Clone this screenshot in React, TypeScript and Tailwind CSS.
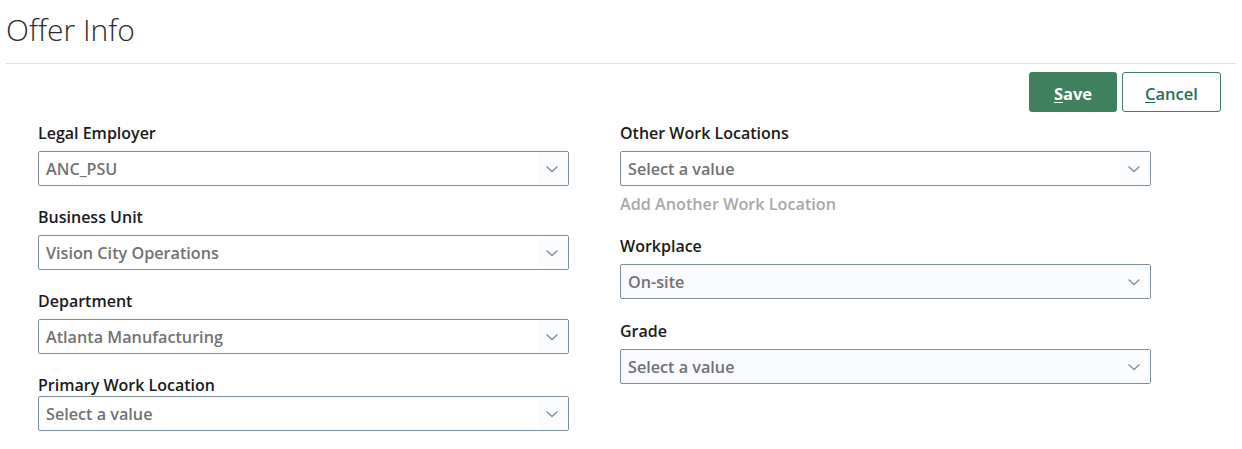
import React from 'react'

const font = { fontFamily: '"Open Sans", "Noto Sans", Arial, sans-serif' }

function Chevron() {
  return (
    <svg width="14" height="8" viewBox="0 0 14 8" fill="none">
      <path d="M1.5 1.5 L7 6.5 L12.5 1.5" stroke="#8a8f94" strokeWidth="1.4" />
    </svg>
  )
}

function SelectBox({ value, tinted }: { value: string; tinted?: boolean }) {
  return (
    <div
      className={`flex h-[35px] w-full items-center rounded-[2px] border border-[#7d8e9b] ${
        tinted ? 'bg-[#f9fbfe]' : 'bg-white'
      }`}
    >
      <span className="flex-1 truncate pl-[7px] pt-px text-[16.2px] font-semibold text-[#727272]">{value}</span>
      <span className="flex h-full w-[30px] items-center justify-center bg-[#fbfcfd] pr-[2px]">
        <Chevron />
      </span>
    </div>
  )
}

function Field({
  label,
  value,
  tinted,
  tight,
}: {
  label: string
  value: string
  tinted?: boolean
  tight?: boolean
}) {
  return (
    <div>
      <div className={`h-[22px] text-[16px] font-semibold leading-[22px] text-[#1a1a1a] ${tight ? '' : 'mb-[7px]'}`}>
        {label}
      </div>
      <SelectBox value={value} tinted={tinted} />
    </div>
  )
}

export default function App() {
  return (
    <div className="h-[449px] w-[1242px] bg-white" style={font}>
      <div className="px-[6px] pt-[10px]">
        <h1 className="h-[40px] text-[30px] font-light leading-[40px] text-[#2b2b2b]">Offer Info</h1>
        <div className="mt-[13px] h-px bg-[#d9dfe6]" />
      </div>

      <div className="mt-[8px] flex justify-end gap-[5px] pr-[21px]">
        <button className="h-[40px] w-[88px] rounded-[3px] bg-[#3f805e] pt-[4px] text-[16.5px] font-bold text-white">
          <span className="underline underline-offset-2">S</span>ave
        </button>
        <button className="h-[40px] w-[99px] rounded-[3px] border border-[#3f805e] bg-white pt-[4px] text-[16.5px] font-semibold text-[#2b6b5c]">
          <span className="underline underline-offset-2">C</span>ancel
        </button>
      </div>

      <div className="mt-[10px] grid grid-cols-[531px_531px] gap-x-[51px] pl-[38px]">
        <div className="flex flex-col gap-[20px]">
          <Field label="Legal Employer" value="ANC_PSU" />
          <Field label="Business Unit" value="Vision City Operations" />
          <Field label="Department" value="Atlanta Manufacturing" />
          <Field label="Primary Work Location" value="Select a value" tight />
        </div>
        <div className="flex flex-col">
          <Field label="Other Work Locations" value="Select a value" />
          <div className="mt-[8px] h-[20px] text-[16.2px] font-semibold leading-[20px] text-[#a8a8a8]">
            Add Another Work Location
          </div>
          <div className="mt-[21px]">
            <Field label="Workplace" value="On-site" tinted />
          </div>
          <div className="mt-[21px]">
            <Field label="Grade" value="Select a value" tinted />
          </div>
        </div>
      </div>
    </div>
  )
}
